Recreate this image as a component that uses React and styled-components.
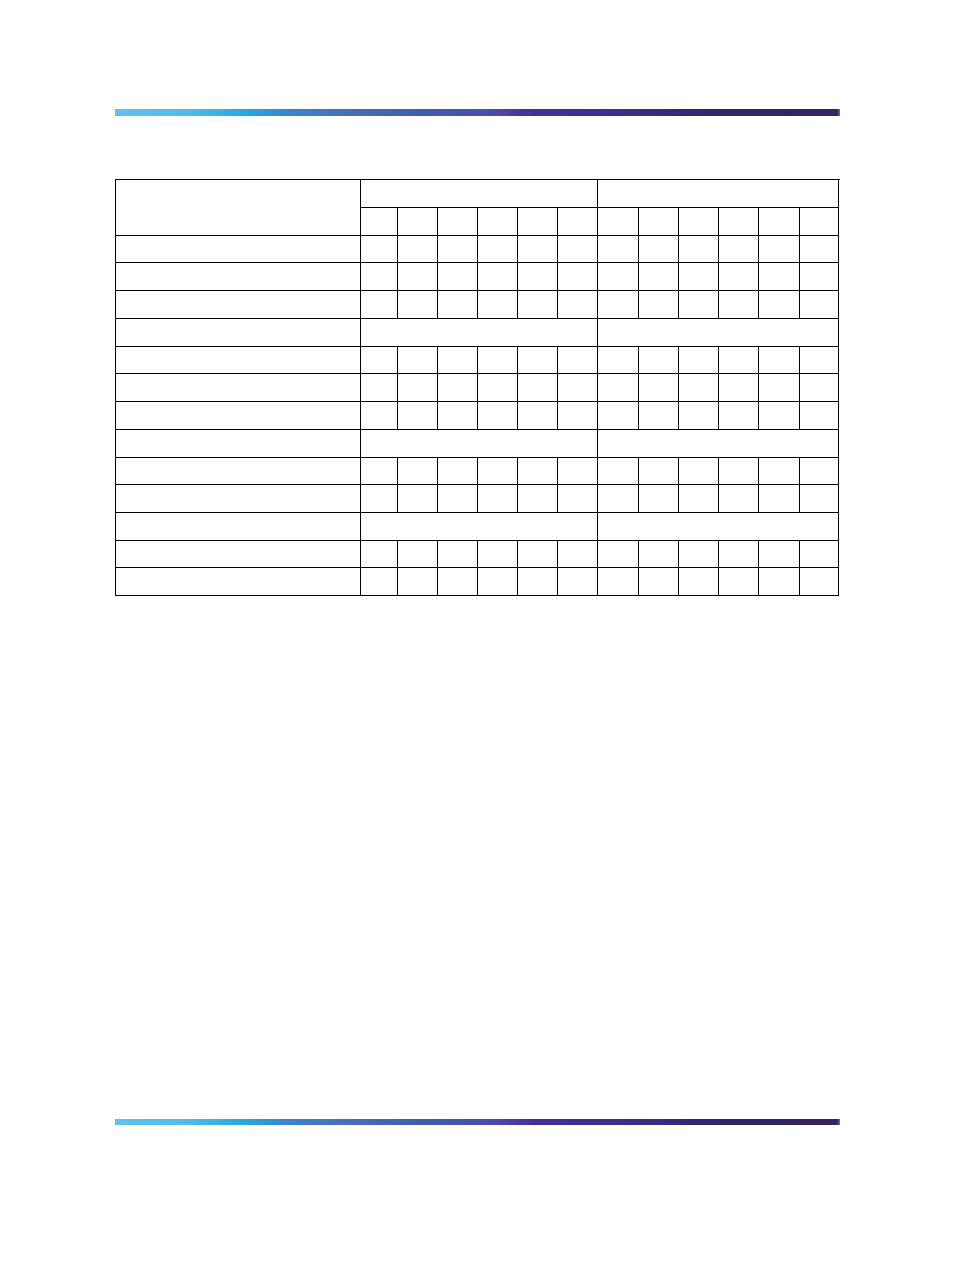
import React from "react";
import styled, { createGlobalStyle } from "styled-components";

const GlobalStyle = createGlobalStyle`
  html, body {
    margin: 0;
    padding: 0;
    background: #fff;
    font-family: "Liberation Sans", Arial, sans-serif;
  }
`;

const Page = styled.div`
  width: 954px;
  min-height: 1272px;
  box-sizing: border-box;
  padding: 109px 0 0 115px;
`;

const Rule = styled.div`
  width: 725px;
  height: ${({ thick }) => thick}px;
  margin-top: ${({ gap }) => gap || 0}px;
  background: linear-gradient(
    to right,
    #64c0ea 0%,
    #52bbe8 10%,
    #2aabe2 17%,
    #3a86c8 24%,
    #4a6db6 32%,
    #3f5eab 42%,
    #4d4ca6 52%,
    #432f92 58%,
    #3d2d88 70%,
    #2f2569 84%,
    #35245f 99.6%,
    #7a6aa8 100%
  );
`;

const Grid = styled.div`
  margin-top: 63px;
  display: grid;
  grid-template-columns: 245px 37px 40px 40px 40px 40px 40px 41px 40px 40px 40px 41px 39px;
  grid-template-rows: 28px 28px 27px 28px 28px 28px 27px 28px 28px 28px 27px 28px 28px 27px 28px;
  width: 724px;
  border-left: 1px solid #000;
  border-top: 1px solid #000;
`;

const Cell = styled.div`
  border-right: 1px solid #000;
  border-bottom: 1px solid #000;
  grid-column: ${({ span }) => (span ? `span ${span}` : "auto")};
  grid-row: ${({ rows }) => (rows ? `span ${rows}` : "auto")};
  font-size: 12px;
  color: #000;
`;

// row kinds: "full" = label + 12 cells, "group" = label + two 6-wide cells
const body = [
  "full", "full", "full", "group",
  "full", "full", "full", "group",
  "full", "full", "group",
  "full", "full",
];

const Row = ({ kind }) => (
  <>
    <Cell />
    {kind === "group" ? (
      <>
        <Cell span={6} />
        <Cell span={6} />
      </>
    ) : (
      Array.from({ length: 12 }, (_, i) => <Cell key={i} />)
    )}
  </>
);

export default function App() {
  return (
    <Page>
      <GlobalStyle />
      <Rule thick={7} />
      <Grid>
        <Cell rows={2} />
        <Cell span={6} />
        <Cell span={6} />
        {Array.from({ length: 12 }, (_, i) => (
          <Cell key={i} />
        ))}
        {body.map((kind, i) => (
          <Row key={i} kind={kind} />
        ))}
      </Grid>
      <Rule thick={6} gap={523} />
    </Page>
  );
}
